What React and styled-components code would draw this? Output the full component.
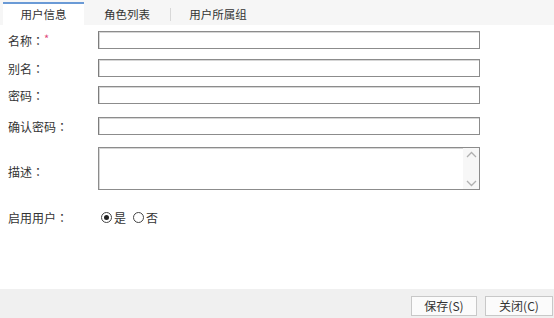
import React, { useState } from "react";
import styled, { createGlobalStyle } from "styled-components";

const GlobalStyle = createGlobalStyle`
  html, body, #root {
    height: 100%;
  }
  body {
    margin: 0;
    background: #ffffff;
    font-family: "Noto Sans CJK SC", "Liberation Sans", sans-serif;
    font-size: 12px;
    color: #333333;
  }
`;

const Page = styled.div`
  display: flex;
  flex-direction: column;
  height: 100%;
`;

const TabBar = styled.div`
  display: flex;
  align-items: stretch;
  height: 25px;
  padding-left: 3px;
  background: #f6f6f6;
`;

const Tab = styled.div`
  display: flex;
  align-items: center;
  justify-content: center;
  width: ${(p) => p.$width}px;
  box-sizing: border-box;
  margin-top: 2px;
  border-top: 2px solid ${(p) => (p.$active ? "#6a9ad6" : "transparent")};
  background: ${(p) => (p.$active ? "#ffffff" : "transparent")};
  color: #333;
  font-size: 11.5px;
  position: relative;
  padding-bottom: 2px;

  &::before {
    content: "";
    display: ${(p) => (p.$sep ? "block" : "none")};
    position: absolute;
    left: 0;
    top: 4px;
    bottom: 4px;
    width: 1px;
    background: #d8d8d8;
  }
`;

const Form = styled.div`
  display: flex;
  flex-direction: column;
  padding: 0 0 0 8px;
`;

const Row = styled.div`
  display: flex;
  align-items: center;
  margin-top: ${(p) => p.$top}px;
  height: ${(p) => p.$height || 18}px;
`;

const Label = styled.div`
  width: 90px;
  flex: none;
  color: #333;
  display: flex;
  align-items: center;
  padding-top: ${(p) => p.$shift || 0}px;
`;

const Colon = styled.span`
  font-family: "Noto Sans CJK JP", "Noto Sans CJK SC", sans-serif;
`;

const Star = styled.span`
  color: #e0477a;
  font-size: 11px;
  position: relative;
  top: -2px;
`;

const Input = styled.input`
  width: 382px;
  height: 18px;
  box-sizing: border-box;
  border: 1px solid #8c8c8c;
  border-left-color: #7d7d7d;
  box-shadow: inset 1px 1px 0 #d6d6d6;
  background: #fff;
  outline: none;
  padding: 0 3px;
  font: inherit;
`;

const AreaBox = styled.div`
  display: flex;
  width: 382px;
  height: 43px;
  box-sizing: border-box;
  border: 1px solid #8c8c8c;
  box-shadow: inset 1px 1px 0 #d6d6d6;
  background: #fff;
`;

const Area = styled.textarea`
  flex: 1;
  border: none;
  outline: none;
  resize: none;
  background: transparent;
  font: inherit;
  padding: 2px 3px;
`;

const Scroll = styled.div`
  width: 16px;
  display: flex;
  flex-direction: column;
  justify-content: space-between;
  align-items: center;
  background: #f7f7f7;
  padding: 3px 0 2px;
`;

const Radios = styled.div`
  display: flex;
  align-items: center;
  gap: 7px;
  margin-left: 3px;
`;

const RadioItem = styled.label`
  display: flex;
  align-items: center;
  gap: 2px;
  cursor: pointer;
`;

const Dot = styled.span`
  width: 11px;
  height: 11px;
  box-sizing: border-box;
  border: 1px solid #444;
  border-radius: 50%;
  display: flex;
  align-items: center;
  justify-content: center;

  &::after {
    content: "";
    display: ${(p) => (p.$on ? "block" : "none")};
    width: 5px;
    height: 5px;
    border-radius: 50%;
    background: #222;
  }
`;

const Footer = styled.div`
  margin-top: auto;
  height: 29px;
  background: #f0f0f0;
  display: flex;
  align-items: center;
  justify-content: flex-end;
  gap: 8px;
  padding-right: 1px;
  padding-top: 4px;
  box-sizing: border-box;
`;

const Button = styled.button`
  width: ${(p) => p.$width}px;
  height: 20px;
  box-sizing: border-box;
  border: 1px solid #c8c8c8;
  background: #fbfbfb;
  color: #333;
  font: inherit;
  padding: 0;
  cursor: pointer;
`;

const Chevron = ({ up }) => (
  <svg width="11" height="7" viewBox="0 0 11 7">
    <path
      d={up ? "M1 6 L5.5 1.5 L10 6" : "M1 1 L5.5 5.5 L10 1"}
      fill="none"
      stroke="#b0b0b0"
      strokeWidth="1.3"
    />
  </svg>
);

const FieldLabel = ({ text, required, shift }) => (
  <Label $shift={shift}>
    {text}
    <Colon>：</Colon>
    {required && <Star>*</Star>}
  </Label>
);

export default function App() {
  const [enabled, setEnabled] = useState(true);

  return (
    <Page>
      <GlobalStyle />
      <TabBar>
        <Tab $active $width={81}>用户信息</Tab>
        <Tab $width={86}>角色列表</Tab>
        <Tab $sep $width={96}>用户所属组</Tab>
      </TabBar>
      <Form>
        <Row $top={6}>
          <FieldLabel text="名称" required />
          <Input />
        </Row>
        <Row $top={10}>
          <FieldLabel text="别名" />
          <Input />
        </Row>
        <Row $top={9}>
          <FieldLabel text="密码" />
          <Input type="password" />
        </Row>
        <Row $top={13}>
          <FieldLabel text="确认密码" />
          <Input type="password" />
        </Row>
        <Row $top={12} $height={43}>
          <FieldLabel text="描述" shift={6} />
          <AreaBox>
            <Area />
            <Scroll>
              <Chevron up />
              <Chevron />
            </Scroll>
          </AreaBox>
        </Row>
        <Row $top={18}>
          <FieldLabel text="启用用户" />
          <Radios>
            <RadioItem onClick={() => setEnabled(true)}>
              <Dot $on={enabled} />是
            </RadioItem>
            <RadioItem onClick={() => setEnabled(false)}>
              <Dot $on={!enabled} />否
            </RadioItem>
          </Radios>
        </Row>
      </Form>
      <Footer>
        <Button $width={66}>保存(S)</Button>
        <Button $width={68}>关闭(C)</Button>
      </Footer>
    </Page>
  );
}
